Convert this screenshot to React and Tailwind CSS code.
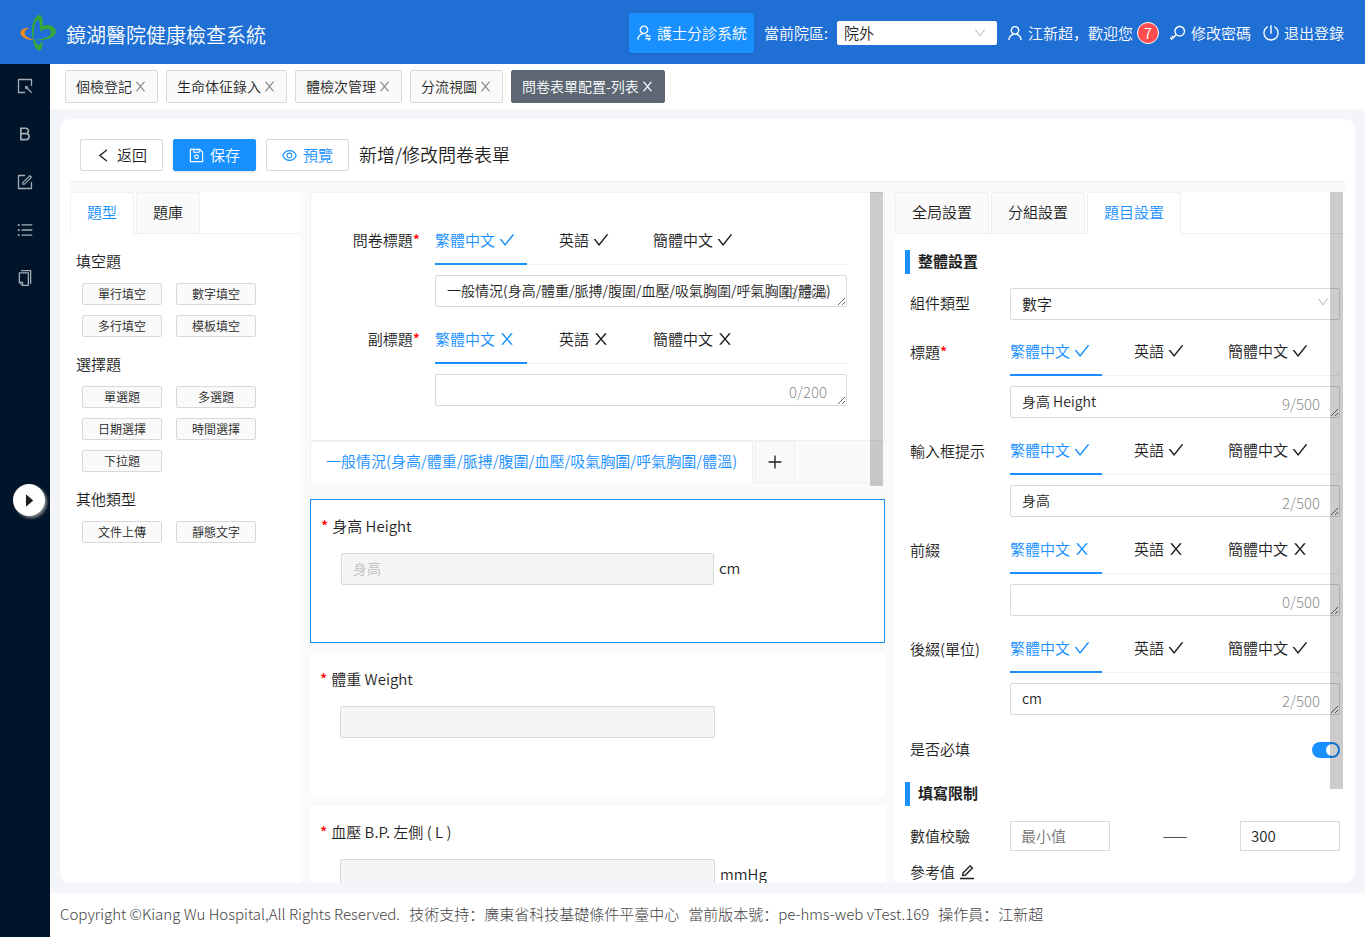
import React, { useState } from 'react';
import {
  AiOutlineBold,
  AiOutlineCheck,
  AiOutlineCopy,
  AiOutlineDown,
  AiOutlineEdit,
  AiOutlineEye,
  AiOutlineForm,
  AiOutlineKey,
  AiOutlineLeft,
  AiOutlinePlus,
  AiOutlinePoweroff,
  AiOutlineSave,
  AiOutlineSelect,
  AiOutlineUnorderedList,
  AiOutlineUser,
  AiOutlineUserSwitch,
  AiFillCaretRight,
} from 'react-icons/ai';

const FORM_TITLE = '一般情況(身高/體重/脈搏/腹圍/血壓/吸氣胸圍/呼氣胸圍/體溫)';

// antd glyphs are drawn without the outer 64 units of padding
const ICON_BOX = '64 64 896 896';

const pageTabs = ['個檢登記', '生命体征錄入', '體檢次管理', '分流視圖', '問卷表單配置-列表'];

const sideMenu = [
  { label: '選擇', icon: AiOutlineSelect },
  { label: '業務', icon: AiOutlineBold },
  { label: '表單', icon: AiOutlineForm },
  { label: '列表', icon: AiOutlineUnorderedList },
  { label: '文檔', icon: AiOutlineCopy },
];

const questionGroups = [
  { title: '填空題', items: ['單行填空', '數字填空', '多行填空', '模板填空'] },
  { title: '選擇題', items: ['單選題', '多選題', '日期選擇', '時間選擇', '下拉題'] },
  { title: '其他類型', items: ['文件上傳', '靜態文字'] },
];

const questions = [
  { title: '身高 Height', placeholder: '身高', unit: 'cm', active: true },
  { title: '體重 Weight', placeholder: '', unit: '', active: false },
  { title: '血壓 B.P. 左側 ( L )', placeholder: '', unit: 'mmHg', active: false },
];

const settings = [
  { id: 'title', label: '標題', required: true, value: '身高 Height', done: true },
  { id: 'hint', label: '輸入框提示', required: false, value: '身高', done: true },
  { id: 'prefix', label: '前綴', required: false, value: '', done: false },
  { id: 'suffix', label: '後綴(單位)', required: false, value: 'cm', done: true },
];

const CloseIcon = ({ size }) => (
  <svg viewBox={ICON_BOX} width={size} height={size} fill="currentColor" aria-hidden="true">
    <path d="M563.8 512l262.5-312.9c4.4-5.2.7-13.1-6.1-13.1h-79.8c-4.7 0-9.2 2.1-12.3 5.700L511.600 449.800 295.100 191.700c-3-3.600-7.500-5.700-12.300-5.700H203c-6.800 0-10.500 7.900-6.100 13.100L459.400 512 196.900 824.900A7.950 7.950 0 0 0 203 838h79.800c4.700 0 9.200-2.100 12.300-5.700l216.500-258.100 216.500 258.100c3 3.600 7.500 5.700 12.300 5.700h79.800c6.800 0 10.500-7.900 6.100-13.100L563.800 512z" />
  </svg>
);

const Logo = () => (
  <svg viewBox="0 0 38 38" className="w-[38px] h-[38px] shrink-0" aria-hidden="true">
    <path d="M9.500 14C3.500 13.500 .2 16 .5 19.500C1.200 23.500 8 26.500 14 25.800C9.500 24.500 5 22.500 4.600 19.500C4.300 17 6 15.200 9.500 14Z" fill="#f08a1c" />
    <path
      fillRule="evenodd"
      d="M13 25.500C10.500 17 12.500 3 18.500 1.200C22 .3 23.500 5.500 22.500 12.200C28 9.500 36 12 35.800 18C35.300 23.500 27 27 15 26C23 25 31 23 31 18.500C31 14.500 25.500 13.500 20 17.500C20.300 10.500 19.800 5 17.500 6C14.800 7.500 13 16 14 25.500Z"
      fill="#35a83a"
    />
    <path d="M13 26C14 32 16.500 36.800 19.500 36.600C22 36.300 23 31 22.400 26.500C21.300 28.500 20.300 31 18.800 31C17.100 31 15.800 29 15.100 26Z" fill="#35a83a" />
  </svg>
);

const Header = () => (
  <header className="h-16 shrink-0 flex items-center justify-between bg-[#1f6fd5] pt-[2px] pl-5 pr-[21px] text-white">
    <div className="flex items-center gap-2">
      <Logo />
      <h1 className="pt-1 text-xl">鏡湖醫院健康檢查系統</h1>
    </div>
    <div className="flex items-center">
      <button className="h-10 px-[7px] flex items-center gap-[5px] rounded-xs bg-[#1890ff] shadow-sm">
        <AiOutlineUserSwitch size={16} viewBox={ICON_BOX} />
        護士分診系統
      </button>
      <label htmlFor="campus" className="ml-[10px]">當前院區:</label>
      <div className="relative ml-[9px]">
        <select id="campus" className="appearance-none w-40 h-6 px-[7px] rounded-xs bg-white text-[#1f1f1f]">
          <option>院外</option>
        </select>
        <AiOutlineDown size={12} viewBox={ICON_BOX} className="absolute right-[11px] top-[6px] text-[#bfbfbf] pointer-events-none" />
      </div>
      <span className="ml-[10px] flex items-center gap-[5px]">
        <AiOutlineUser size={16} viewBox={ICON_BOX} />
        江新超，歡迎您
      </span>
      <span className="ml-1 size-[22px] flex items-center justify-center rounded-full border border-white bg-[#ff4d4f]">
        7
      </span>
      <button className="ml-[11px] flex items-center gap-[5px]">
        <AiOutlineKey size={16} viewBox={ICON_BOX} />
        修改密碼
      </button>
      <button className="ml-3 flex items-center gap-[5px]">
        <AiOutlinePoweroff size={16} viewBox={ICON_BOX} />
        退出登錄
      </button>
    </div>
  </header>
);

const Sidebar = () => (
  <nav className="relative w-[50px] shrink-0 bg-[#001529]">
    {sideMenu.map(({ label, icon: Icon }) => (
      <a key={label} href="#" aria-label={label} className="h-12 flex items-center justify-center pb-1 text-[#a6adb4]">
        <Icon size={16} viewBox={ICON_BOX} />
      </a>
    ))}
    <button
      aria-label="展開"
      className="absolute left-[13px] top-[420px] size-8 z-10 flex items-center justify-center rounded-full bg-white text-[#1f1f1f] shadow-[2px_2px_3px_#888888]"
    >
      <AiFillCaretRight size={15} viewBox={ICON_BOX} />
    </button>
  </nav>
);

const PageTabs = () => (
  <div className="h-[45px] shrink-0 flex items-center gap-2 bg-white px-[15px] text-sm">
    {pageTabs.map((tab, i) => {
      const active = i === pageTabs.length - 1;
      return (
        <div
          key={tab}
          className={`h-[33px] px-[10px] flex items-center gap-[2px] rounded-xs border ${
            active ? 'bg-[#5c6773] border-[#5c6773] text-white' : 'bg-[#fafafa] border-[#d9d9d9]'
          }`}
        >
          <a href="#" className="pb-[2px]">{tab}</a>
          <button aria-label={`關閉 ${tab}`} className={active ? 'text-white' : 'text-[#8c8c8c]'}>
            <CloseIcon size={13} />
          </button>
        </div>
      );
    })}
  </div>
);

const Toolbar = () => (
  <div className="flex items-center px-5 pt-5 pb-[10px]">
    <div className="flex gap-[10px]">
      <button className="h-8 px-[15px] flex items-center gap-[6px] rounded-xs border border-[#d9d9d9]">
        <AiOutlineLeft size={15} viewBox={ICON_BOX} />
        返回
      </button>
      <button className="h-8 px-[15px] flex items-center gap-[6px] rounded-xs border border-[#1890ff] bg-[#1890ff] text-white shadow-sm">
        <AiOutlineSave size={15} viewBox={ICON_BOX} />
        保存
      </button>
      <button className="h-8 px-[15px] flex items-center gap-[6px] rounded-xs border border-[#d9d9d9] text-[#1890ff]">
        <AiOutlineEye size={15} viewBox={ICON_BOX} />
        預覽
      </button>
    </div>
    <h2 className="ml-[10px] pb-[2px] text-lg leading-[30px]">新增/修改問卷表單</h2>
  </div>
);

/* Card style tabs used on top of the side panels */
const CardTabs = ({ tabs, active }) => (
  <div role="tablist" className="h-[42px] shrink-0 flex gap-[2px] border-b border-[#f0f0f0]">
    {tabs.map((tab) => (
      <button
        key={tab}
        role="tab"
        aria-selected={tab === active}
        className={`h-[42px] px-4 pb-[2px] border border-[#f0f0f0] rounded-t-xs ${
          tab === active ? 'bg-white border-b-white text-[#1890ff]' : 'bg-[#fafafa]'
        }`}
      >
        {tab}
      </button>
    ))}
  </div>
);

const LangField = ({ id, value, max, done }) => {
  const [text, setText] = useState(value);
  return (
    <div className="flex-1 min-w-0">
      <div role="tablist" className="h-[47px] flex gap-8 border-b border-[#f0f0f0]">
        {['繁體中文', '英語', '簡體中文'].map((lang, i) => (
          <button
            key={lang}
            role="tab"
            aria-selected={i === 0}
            className={`h-[47px] pr-3 pb-px flex items-center gap-1 whitespace-nowrap border-b-2 ${
              i === 0 ? 'border-[#1890ff] text-[#1890ff]' : 'border-transparent'
            }`}
          >
            {lang}
            {done ? <AiOutlineCheck size={16} viewBox={ICON_BOX} /> : <CloseIcon size={16} />}
          </button>
        ))}
      </div>
      <div className="relative mt-[10px]">
        <textarea
          id={id}
          rows={1}
          value={text}
          onChange={(e) => setText(e.target.value)}
          className="block w-full h-8 px-[11px] py-[3px] overflow-hidden rounded-xs border border-[#d9d9d9] text-sm leading-[22px]"
        />
        <span className="absolute right-5 bottom-1 leading-5 font-light text-black/50 pointer-events-none">
          {text.length}/{max}
        </span>
      </div>
    </div>
  );
};

const Star = () => <span className="font-medium text-[#ff0000]">*</span>;

const TypePanel = () => (
  <aside className="w-[230px] shrink-0 bg-white overflow-hidden">
    <CardTabs tabs={['題型', '題庫']} active="題型" />
    <div className="pt-[10px]">
      {questionGroups.map((group) => (
        <section key={group.title} className="pl-[6px]">
          <h3 className="pt-[5px] pb-[10px] leading-6">{group.title}</h3>
          <div className="grid grid-cols-[80px_80px] gap-x-[14px] pl-[6px]">
            {group.items.map((item) => (
              <button key={item} className="h-[22px] mb-[10px] rounded-xs border border-[#d9d9d9] bg-[#fafafa] text-xs">
                {item}
              </button>
            ))}
          </div>
        </section>
      ))}
    </div>
  </aside>
);

const Question = ({ title, placeholder, unit, active }) => (
  <section className={`shrink-0 bg-white pt-[14px] ${active ? 'h-36 border border-[#1890ff]' : 'h-[143px]'}`}>
    <label className="block px-[10px] leading-6">
      <Star />
      <span className="ml-1">{title}</span>
    </label>
    <div className="flex gap-[5px] px-[30px] pt-[15px]">
      <input
        disabled
        aria-label={title}
        placeholder={placeholder}
        className="flex-1 min-w-0 h-8 px-[11px] pb-[2px] rounded-xs border border-[#d9d9d9] bg-[#f5f5f5] text-sm placeholder:text-[#bfbfbf]"
      />
      <span className="w-[135px] leading-[30px]">{unit}</span>
    </div>
  </section>
);

const Editor = () => (
  <main className="relative flex-1 min-w-0 flex flex-col overflow-hidden">
    <div className="shrink-0 flex flex-col gap-[10px] border border-[#f0f0f0] bg-white pt-[25px] pb-[34px] pr-[37px]">
      <div className="flex gap-[15px]">
        <label htmlFor="form-title" className="w-[109px] leading-[44px] text-right">
          問卷標題<Star />
        </label>
        <LangField id="form-title" value={FORM_TITLE} max={200} done />
      </div>
      <div className="flex gap-[15px]">
        <label htmlFor="form-subtitle" className="w-[109px] leading-[44px] text-right">
          副標題<Star />
        </label>
        <LangField id="form-subtitle" value="" max={200} done={false} />
      </div>
    </div>

    <div className="h-[42px] shrink-0 flex gap-[2px] border-b border-[#f0f0f0] mb-4">
      <button className="h-[42px] px-[15px] pb-[2px] border border-[#f0f0f0] border-b-white bg-white text-[#1890ff] whitespace-nowrap">
        {FORM_TITLE}
      </button>
      <button aria-label="新增分組" className="h-[42px] w-10 flex items-center justify-center border border-[#f0f0f0] bg-[#fafafa]">
        <AiOutlinePlus size={16} viewBox={ICON_BOX} />
      </button>
    </div>

    <div className="flex flex-col gap-[10px]">
      {questions.map((q) => (
        <Question key={q.title} {...q} />
      ))}
    </div>
    <div className="absolute right-[2px] top-0 w-[13px] h-[294px] bg-black/20" />
  </main>
);

const SectionTitle = ({ children }) => (
  <h3 className="h-6 border-l-[5px] border-[#1890ff] pl-2 leading-[22px] font-bold">{children}</h3>
);

const SettingsPanel = () => {
  const [required, setRequired] = useState(true);
  return (
    <aside className="relative w-[450px] shrink-0 bg-white overflow-hidden">
      <CardTabs tabs={['全局設置', '分組設置', '題目設置']} active="題目設置" />
      <div className="pl-[10px] pr-[5px] pt-4">
        <SectionTitle>整體設置</SectionTitle>

        <div className="pl-[5px] pt-[14px] flex">
          <label htmlFor="component-type" className="w-[100px] leading-[30px]">組件類型</label>
          <div className="relative flex-1">
            <select id="component-type" className="appearance-none block w-full h-8 px-[11px] rounded-xs border border-[#d9d9d9]">
              <option>數字</option>
            </select>
            <AiOutlineDown size={12} viewBox={ICON_BOX} className="absolute right-[11px] top-2 text-[#bfbfbf] pointer-events-none" />
          </div>
        </div>

        <div className="pl-[5px] pt-[9px] flex flex-col gap-[10px]">
          {settings.map((s) => (
            <div key={s.id} className="flex">
              <label htmlFor={s.id} className="w-[100px] leading-[45px]">
                {s.label}
                {s.required && <Star />}
              </label>
              <LangField id={s.id} value={s.value} max={500} done={s.done} />
            </div>
          ))}
        </div>

        <label className="pl-[5px] mt-[19px] mb-4 h-8 flex items-center justify-between">
          <span className="pb-[2px]">是否必填</span>
          <input
            type="checkbox"
            role="switch"
            checked={required}
            onChange={(e) => setRequired(e.target.checked)}
            className="peer sr-only"
          />
          <span className="w-7 h-4 p-[2px] flex justify-start rounded-full bg-[#bfbfbf] peer-checked:justify-end peer-checked:bg-[#1890ff]">
            <span className="size-3 rounded-full bg-white" />
          </span>
        </label>

        <SectionTitle>填寫限制</SectionTitle>

        <div className="pl-[5px] pt-[15px] flex items-center">
          <label htmlFor="min-value" className="w-[100px]">數值校驗</label>
          <div className="flex-1 flex items-center justify-between">
            <input
              id="min-value"
              placeholder="最小值"
              className="w-[100px] h-[30px] px-[10px] pb-[2px] border border-[#d9d9d9] placeholder:text-[#757575]"
            />
            <span>——</span>
            <input
              aria-label="最大值"
              defaultValue="300"
              className="w-[100px] h-[30px] px-[10px] pb-[2px] border border-[#d9d9d9]"
            />
          </div>
        </div>
        <div className="pl-[5px] pt-[9px] flex items-center gap-1 leading-6">
          參考值
          <button aria-label="編輯參考值">
            <AiOutlineEdit size={16} viewBox={ICON_BOX} />
          </button>
        </div>
      </div>
      <div className="absolute right-[2px] top-0 w-[13px] h-[597px] bg-black/20" />
    </aside>
  );
};

const App = () => (
  <div className="h-screen flex flex-col overflow-hidden bg-[#f4f5f8] text-[15px] leading-6 font-[350] text-[#1f1f1f] font-['Noto_Sans_CJK_SC',sans-serif]">
    <Header />
    <div className="flex-1 min-h-0 flex">
      <Sidebar />
      <div className="flex-1 min-w-0 flex flex-col">
        <PageTabs />
        <div className="flex-1 min-h-0 m-[10px] flex flex-col rounded-[10px] bg-white overflow-hidden">
          <Toolbar />
          <div className="flex-1 min-h-0 mx-[10px] pt-[10px] flex gap-[10px] border-t border-[#f0f0f0] bg-[#fafafa]">
            <TypePanel />
            <Editor />
            <SettingsPanel />
          </div>
        </div>
        <footer className="h-11 shrink-0 flex items-center gap-[9px] bg-white px-[10px] pb-[2px] font-light text-[#444444] whitespace-nowrap">
          <span>Copyright ©Kiang Wu Hospital,All Rights Reserved.</span>
          <span>技術支持：廣東省科技基礎條件平臺中心</span>
          <span>當前版本號：pe-hms-web vTest.169</span>
          <span>操作員：江新超</span>
        </footer>
      </div>
    </div>
  </div>
);

export default App;
